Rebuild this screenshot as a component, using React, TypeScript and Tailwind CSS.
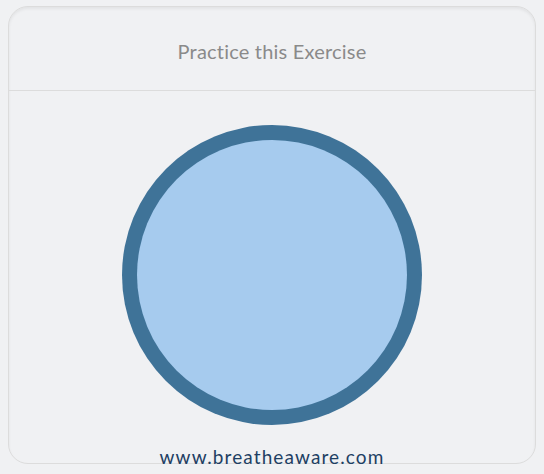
import React from "react"

export default function App() {
  return (
    <div className="w-[544px] h-[474px] bg-[#f0f1f3] pt-[6px] px-[8px] overflow-hidden" style={{ fontFamily: "Lato, 'Open Sans', sans-serif" }}>
      <div className="h-[458px] rounded-[20px] border border-[#dcdcdc] shadow-[inset_0_2px_3px_rgba(0,0,0,0.06)] flex flex-col">
        {/* header */}
        <div className="h-[84px] shrink-0 flex items-center justify-center border-b border-[#dcdcdc]">
          <h1 className="text-[20px] tracking-[0.2px] text-[#8a8a8a] pt-[4px]">Practice this Exercise</h1>
        </div>

        {/* breathing circle */}
        <div className="flex justify-center pt-[34px]">
          <div className="w-[300px] h-[300px] shrink-0 rounded-full bg-[#3f7398] flex items-center justify-center">
            <div className="w-[270px] h-[270px] rounded-full bg-[#a6cbee]" />
          </div>
        </div>

        <div className="flex justify-center mt-[22px]">
          <span className="text-[19px] leading-none tracking-[1.1px] text-[#1e3f63]">www.breatheaware.com</span>
        </div>
      </div>
    </div>
  )
}
